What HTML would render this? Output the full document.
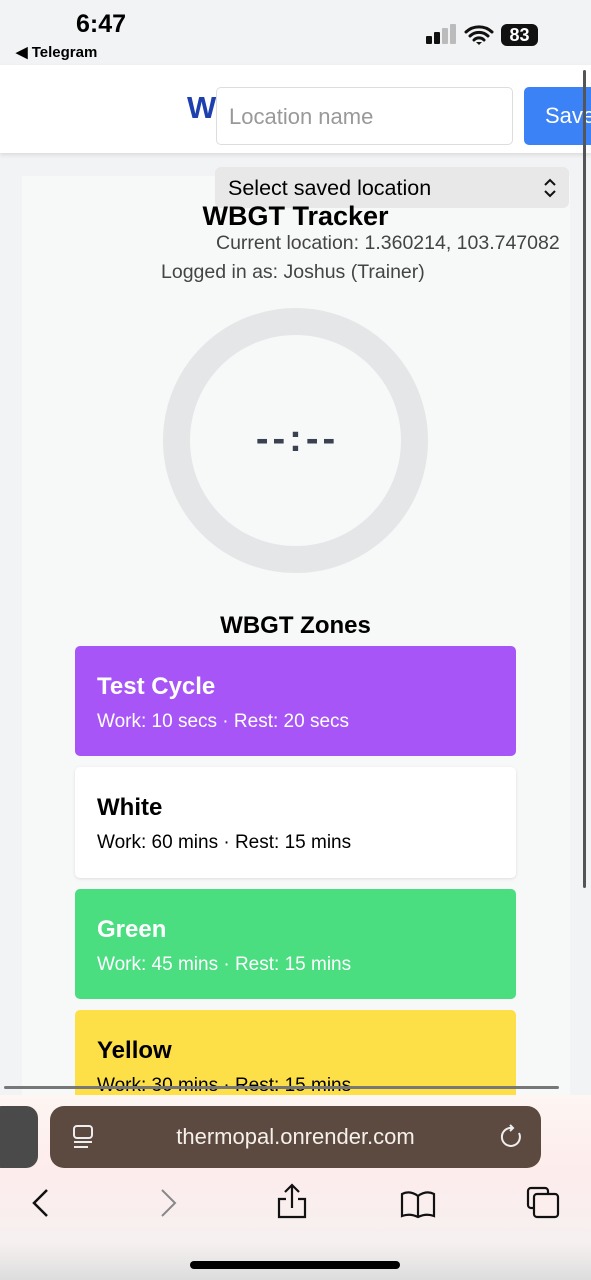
<!DOCTYPE html>
<html><head><meta charset="utf-8"><style>
*{box-sizing:border-box;margin:0;padding:0}
body{width:591px;height:1280px;overflow:hidden;background:#f2f3f5;font-family:"Liberation Sans",sans-serif;position:relative}
.abs{position:absolute}
.card{position:absolute;left:75px;width:441px;border-radius:5px;padding:0 22px}
.card h3{font-size:24px;font-weight:bold;padding-top:27px}
.card p{font-size:19px;margin-top:10px}
</style></head><body>
<div class="abs" style="left:76px;top:10px;font-size:25px;font-weight:bold">6:47</div>
<div class="abs" style="left:16px;top:43px;font-size:15px;font-weight:bold">◀ Telegram</div>
<div class="abs" style="left:426px;top:36px;width:6px;height:8px;background:#111;border-radius:1px"></div>
<div class="abs" style="left:434px;top:32px;width:6px;height:12px;background:#111;border-radius:1px"></div>
<div class="abs" style="left:442px;top:28px;width:6px;height:16px;background:#bbb;border-radius:1px"></div>
<div class="abs" style="left:450px;top:24px;width:6px;height:20px;background:#bbb;border-radius:1px"></div>
<svg class="abs" style="left:464px;top:24px" width="30" height="22" viewBox="0 0 30 22"><path d="M2 8a19 19 0 0 1 26 0M6 12a13 13 0 0 1 18 0M10 16a7 7 0 0 1 10 0" fill="none" stroke="#111" stroke-width="3" stroke-linecap="round"/><path d="M12 18l3 3 3-3z" fill="#111"/></svg>
<div class="abs" style="left:501px;top:24px;width:37px;height:22px;background:#111;border-radius:6px;color:#fff;font-weight:bold;font-size:18px;text-align:center;line-height:22px">83</div>
<div class="abs" style="left:0;top:65px;width:591px;height:88px;background:#fff;box-shadow:0 2px 4px rgba(0,0,0,.1)"></div>
<div class="abs" style="left:187px;top:90px;font-size:31px;font-weight:bold;color:#1e40af">W</div>
<div class="abs" style="left:216px;top:87px;width:297px;height:58px;background:#fff;border:1px solid #ddd;border-radius:5px;font-size:22px;color:#999;padding:16px 12px">Location name</div>
<div class="abs" style="left:524px;top:87px;width:80px;height:58px;background:#3b82f6;border-radius:5px;font-size:22px;color:#fff;padding:16px 21px">Save</div>
<div class="abs" style="left:583px;top:70px;width:3px;height:818px;background:#555;border-radius:2px"></div>
<div class="abs" style="left:22px;top:176px;width:548px;height:920px;background:#f7f8f8"></div>
<div class="abs" style="left:215px;top:167px;width:354px;height:41px;background:#e8e8e8;border-radius:6px;font-size:21.5px;padding:9px 13px">Select saved location
<svg style="position:absolute;right:12px;top:11px" width="14" height="20" viewBox="0 0 14 20"><path d="M2 7l5-5 5 5M2 13l5 5 5-5" fill="none" stroke="#111" stroke-width="2"/></svg></div>
<div class="abs" style="left:0;width:591px;top:201px;text-align:center;font-size:27px;font-weight:bold">WBGT Tracker</div>
<div class="abs" style="left:216px;top:232px;font-size:19.5px;color:#444">Current location: 1.360214, 103.747082</div>
<div class="abs" style="left:161px;top:261px;font-size:19.5px;color:#444">Logged in as: Joshus (Trainer)</div>
<div class="abs" style="left:163px;top:308px;width:265px;height:265px;border:27px solid #e5e6e8;border-radius:50%"></div>
<div class="abs" style="left:0;width:591px;top:418px;text-align:center;font-size:38px;font-weight:bold;color:#3a4252;letter-spacing:4px;padding-left:4px">--:--</div>
<div class="abs" style="left:0;width:591px;top:612px;text-align:center;font-size:24px;font-weight:bold">WBGT Zones</div>
<div class="card" style="top:646px;height:110px;background:#a855f7;color:#fff"><h3>Test Cycle</h3><p>Work: 10 secs · Rest: 20 secs</p></div>
<div class="card" style="top:767px;height:111px;background:#fff;box-shadow:0 1px 3px rgba(0,0,0,.1)"><h3>White</h3><p>Work: 60 mins · Rest: 15 mins</p></div>
<div class="card" style="top:889px;height:110px;background:#4ade80;color:#fff"><h3>Green</h3><p>Work: 45 mins · Rest: 15 mins</p></div>
<div class="card" style="top:1010px;height:90px;background:#fde047"><h3>Yellow</h3><p>Work: 30 mins · Rest: 15 mins</p></div>
<div class="abs" style="left:4px;top:1086px;width:555px;height:3px;background:#777;border-radius:2px"></div>
<div class="abs" style="left:0;top:1095px;width:591px;height:185px;background:linear-gradient(#fdf6f2,#fdecec 40%,#f6f0f0 80%,#ddd)"></div>
<div class="abs" style="left:-10px;top:1106px;width:48px;height:62px;background:#4a4a4a;border-radius:12px"></div>
<div class="abs" style="left:50px;top:1106px;width:491px;height:62px;background:#5c4a40;border-radius:14px;color:#f5f0ea;font-size:22px;text-align:center;line-height:62px">thermopal.onrender.com</div>
<svg class="abs" style="left:72px;top:1124px" width="24" height="26" viewBox="0 0 24 26"><rect x="2" y="2" width="18" height="12" rx="3" fill="none" stroke="#eee" stroke-width="2"/><path d="M2 18h18M2 23h14" stroke="#eee" stroke-width="2"/></svg>
<svg class="abs" style="left:498px;top:1124px" width="26" height="26" viewBox="0 0 26 26"><path d="M14 4A9 9 0 1 0 21 9M12 1l3 3-3 3" fill="none" stroke="#eee" stroke-width="2"/></svg>
<svg class="abs" style="left:0;top:1180px" width="591" height="45" viewBox="0 0 591 45"><path d="M47 10l-13 13 13 13" fill="none" stroke="#111" stroke-width="2.5"/><path d="M162 10l13 13-13 13" fill="none" stroke="#888" stroke-width="2"/><path d="M286 19h-7v18h26v-18h-7M292 28V6M285 12l7-7 7 7" fill="none" stroke="#111" stroke-width="2.2"/><path d="M402 14q8-4 16 2q8-6 16-2v22q-8-3-16 1q-8-4-16-1z M418 16v20" fill="none" stroke="#111" stroke-width="2.2"/><rect x="528" y="8" width="20" height="20" rx="3" fill="none" stroke="#111" stroke-width="2.2"/><rect x="534" y="14" width="24" height="23" rx="3" fill="#fdeeee" stroke="#111" stroke-width="2.2"/></svg>
<div class="abs" style="left:190px;top:1261px;width:210px;height:8px;background:#000;border-radius:4px"></div>
</body></html>
